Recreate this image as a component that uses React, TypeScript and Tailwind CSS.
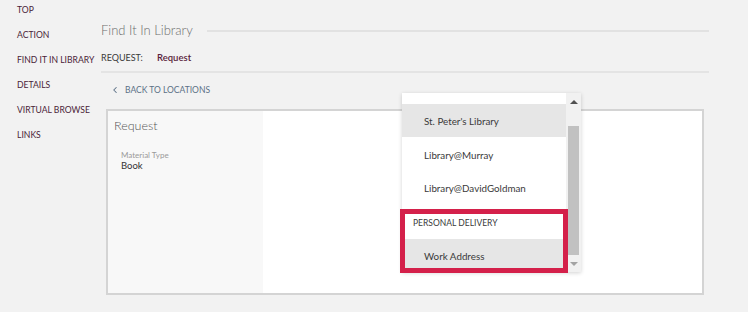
import { ChevronLeft } from "lucide-react";

const navItems = ["TOP", "ACTION", "FIND IT IN LIBRARY", "DETAILS", "VIRTUAL BROWSE", "LINKS"];

const App = () => {
  return (
    <div className="relative w-[748px] h-[312px] overflow-hidden bg-[#f2f2f2] font-['Lato',sans-serif] flex">
      {/* SIDE NAV */}
      <nav className="w-[101px] shrink-0 pl-[17px] flex flex-col gap-[5px]">
        {navItems.map((item) => (
          <div key={item} className="h-[20px] flex items-center text-[8.6px] text-[#4a2438] whitespace-nowrap">
            {item}
          </div>
        ))}
      </nav>

      {/* MAIN */}
      <main className="w-[608px] flex flex-col pt-[22px]">
        <div className="h-[18px] flex items-center gap-[14px]">
          <h2 className="text-[13px] font-light text-[#6e6e6e] whitespace-nowrap">Find It In Library</h2>
          <div className="flex-1 h-[2px] bg-[#e2e2e2]" />
        </div>
        <div className="mt-[9px] h-[18px] flex items-center text-[9px]">
          <span className="text-[#3a3a3a] w-[56px]">REQUEST:</span>
          <span className="text-[#5a1e3c] font-semibold text-[9.5px]">Request</span>
        </div>
        <div className="mt-[4px] h-[2px] bg-[#e4e4e4]" />
        <div className="mt-[8px] h-[18px] flex items-center pl-[9px] gap-[5px] text-[#5b7086]">
          <ChevronLeft size={10} strokeWidth={2.5} />
          <span className="text-[8.5px]">BACK TO LOCATIONS</span>
        </div>

        {/* CARD */}
        <div className="mt-[10px] ml-[5px] w-[598px] h-[186px] border-2 border-[#d4d4d4] flex bg-white">
          <div className="w-[155px] bg-[#f8f8f8] pl-[6px] pt-[6px]">
            <div className="text-[12.5px] font-light text-[#555]">Request</div>
            <div className="mt-[14px] pl-[7px]">
              <div className="text-[8px] text-[#9a9a9a] leading-[10px]">Material Type</div>
              <div className="text-[9.5px] text-[#333] leading-[12px]">Book</div>
            </div>
          </div>
          <div className="flex-1 bg-white" />
        </div>
      </main>

      {/* DROPDOWN */}
      <div className="absolute left-[402px] top-[93px] w-[179px] h-[179px] bg-white shadow-[0_1px_4px_rgba(0,0,0,0.18)] flex">
        <div className="flex-1 flex flex-col pt-[11px] text-[9.8px] text-[#3a3a3a]">
          <div className="h-[33px] shrink-0 flex items-center pl-[22px] pt-[2px] bg-[#e6e6e6]">St. Peter's Library</div>
          <div className="h-[34px] shrink-0 flex items-center pl-[22px] pt-[2px]">Library@Murray</div>
          <div className="h-[33px] shrink-0 flex items-center pl-[22px] pt-[2px]">Library@DavidGoldman</div>
          <div className="h-[35px] shrink-0 flex items-center pl-[11px] pt-[3px] text-[8.5px]">PERSONAL DELIVERY</div>
          <div className="h-[33px] shrink-0 flex items-center pl-[22px] pt-[2px] bg-[#e6e6e6]">Work Address</div>
        </div>
        <div className="w-[15px] bg-[#f1f1f1] flex flex-col items-center">
          <div className="h-[17px] flex items-center justify-center">
            <div className="w-0 h-0 border-l-[4px] border-r-[4px] border-b-[4px] border-l-transparent border-r-transparent border-b-[#505050]" />
          </div>
          <div className="mt-[16px] w-[11px] h-[129px] bg-[#c1c1c1]" />
          <div className="flex-1 flex items-center justify-center">
            <div className="w-0 h-0 border-l-[4px] border-r-[4px] border-t-[4px] border-l-transparent border-r-transparent border-t-[#a3a3a3]" />
          </div>
        </div>
      </div>

      {/* HIGHLIGHT */}
      <div className="absolute left-[400px] top-[209px] w-[168px] h-[64px] border-[5px] border-[#d4204a]" />
    </div>
  );
};

export default App;
